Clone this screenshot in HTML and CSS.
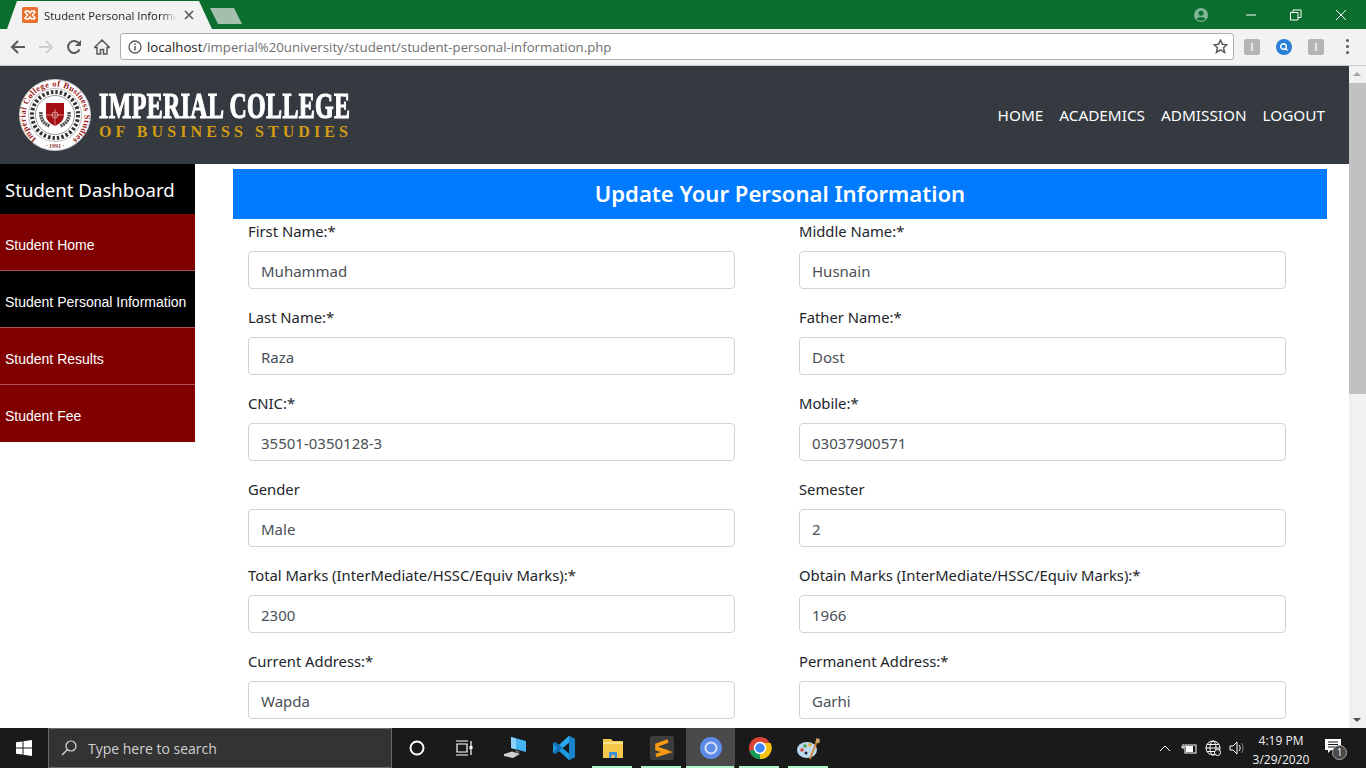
FILE: index.html
```html
<!DOCTYPE html>
<html lang="en">
<head>
<meta charset="utf-8">
<title>Student Personal Information</title>
<link rel="stylesheet" href="styles.css">
</head>
<body>
<div class="tabstrip">
  <div class="tab">
    <svg class="favicon" viewBox="0 0 16 16"><rect width="16" height="16" rx="2" fill="#e8702a"/><path d="M4 4h2.500L8 6l1.500-2H12l1 1-2.500 3L13 11l-1 1H9.500L8 10l-1.500 2H4l-1-1 2.500-3L3 5z" fill="none" stroke="#fff" stroke-width="1.500"/></svg>
    <span class="tabtitle">Student Personal Informa</span>
    <svg class="tabclose" viewBox="0 0 10 10"><path d="M1 1l8 8M9 1l-8 8" stroke="#5a5a5a" stroke-width="1.700"/></svg>
  </div>
  <div class="newtab"></div>
  <div class="spacer"></div>
  <svg class="profile" viewBox="0 0 14 14"><circle cx="7" cy="7" r="7" fill="#7fb596"/><circle cx="7" cy="5.200" r="2.500" fill="#0a6e2e"/><path d="M2.500 11c1-2.200 8-2.200 9 0-2 2.300-7 2.300-9 0z" fill="#0a6e2e"/></svg>
  <div class="winbtn"><svg viewBox="0 0 12 12"><path d="M1 6h10" stroke="#fff"/></svg></div>
  <div class="winbtn"><svg viewBox="0 0 12 12"><path d="M.5 3.500h7.500v7.500H.5zM3 3.500V1h8v7.500H8" fill="none" stroke="#fff"/></svg></div>
  <div class="winbtn"><svg viewBox="0 0 12 12"><path d="M1 1l10 10M11 1L1 11" stroke="#fff"/></svg></div>
</div>
<div class="toolbar">
  <svg class="navicon" viewBox="0 0 16 16"><path d="M15 8H2M8 2L2 8l6 6" fill="none" stroke="#5a5a5a" stroke-width="2"/></svg>
  <svg class="navicon" viewBox="0 0 16 16"><path d="M1 8h13M8 2l6 6-6 6" fill="none" stroke="#cfcfcf" stroke-width="2"/></svg>
  <svg class="navicon" viewBox="0 0 16 16"><path d="M13.500 10.500A6 6 0 1 1 13 4.500" fill="none" stroke="#5a5a5a" stroke-width="2"/><path d="M15 1v6H9z" fill="#5a5a5a"/></svg>
  <svg class="navicon" viewBox="0 0 16 16"><path d="M8 1L.5 8.500h2.500v6.500h3.500V10.500h3V15h3.500V8.500h2.500z" fill="none" stroke="#5a5a5a" stroke-width="1.500"/></svg>
  <div class="omnibox">
    <svg class="info" viewBox="0 0 14 14"><circle cx="7" cy="7" r="6" fill="none" stroke="#5a5a5a" stroke-width="1.300"/><path d="M7 6v4.500M7 3.500v1.500" stroke="#5a5a5a" stroke-width="1.500"/></svg>
    <span class="url"><span class="host">localhost</span>/imperial%20university/student/student-personal-information.php</span>
    <svg class="star" viewBox="0 0 14 14"><path d="M7 1l1.800 4 4.200.4-3.200 2.800 1 4.300L7 10.200 3.200 12.500l1-4.300L1 5.400 5.200 5z" fill="none" stroke="#5a5a5a" stroke-width="1.400"/></svg>
  </div>
  <div class="ext"><span class="extbar"></span></div>
  <svg class="extround" viewBox="0 0 16 16"><circle cx="8" cy="8" r="8" fill="#2a7fd6"/><circle cx="7.500" cy="7.500" r="2.800" fill="none" stroke="#fff" stroke-width="1.400"/><path d="M9.500 9.500l2 2" stroke="#fff" stroke-width="1.400"/></svg>
  <div class="ext"><span class="extbar"></span></div>
  <div class="dots"><i></i><i></i><i></i></div>
</div>
<div class="viewport">
  <div class="page">
    <header class="sitehead">
      <svg class="seal" viewBox="0 0 72 72">
        <circle cx="36" cy="36" r="35.500" fill="#fff" stroke="#c9c9c9"/>
        <defs><path id="ringtext" d="M17.500 60A29.500 29.500 0 1 1 54.500 60"/></defs>
        <text class="sealtext"><textPath href="#ringtext" textLength="146" lengthAdjust="spacing">Imperial College of Business Studies</textPath></text>
        <text class="sealyear" x="36" y="68.500" text-anchor="middle">· 1991 ·</text>
        <circle cx="36" cy="36" r="26.500" fill="none" stroke="#aaa" stroke-width=".8"/>
        <circle cx="36" cy="36" r="23" fill="none" stroke="#333" stroke-width="4" stroke-dasharray="2.500 2"/>
        <circle cx="36" cy="36" r="19.500" fill="#fff" stroke="#999"/>
        <path d="M22 33c-1 7 3 12 9 14M50 33c1 7-3 12-9 14" fill="none" stroke="#555" stroke-width="3.500" stroke-dasharray="2 .6"/>
        <path d="M27 24h18v12c0 6-5 9-9 11-4-2-9-5-9-11z" fill="#a50e13"/>
        <path d="M36 30v17M27 36h18" stroke="#e0a0a0" stroke-width=".8"/>
        <circle cx="36" cy="36" r="3" fill="none" stroke="#e0c0c0" stroke-width=".8"/>
      </svg>
      <div class="brand">
        <div class="brandname">IMPERIAL COLLEGE</div>
        <div class="brandsub">OF BUSINESS STUDIES</div>
      </div>
      <nav class="sitenav"><a>HOME</a><a>ACADEMICS</a><a>ADMISSION</a><a>LOGOUT</a></nav>
    </header>
    <div class="body">
      <aside class="side">
        <div class="sidehead">Student Dashboard</div>
        <a class="sidelink">Student Home</a>
        <a class="sidelink active">Student Personal Information</a>
        <a class="sidelink">Student Results</a>
        <a class="sidelink">Student Fee</a>
      </aside>
      <main class="main">
        <h1 class="formtitle">Update Your Personal Information</h1>
        <div class="formgrid">
          <div class="field"><label>First Name:*</label><input value="Muhammad"></div>
          <div class="field"><label>Middle Name:*</label><input value="Husnain"></div>
          <div class="field"><label>Last Name:*</label><input value="Raza"></div>
          <div class="field"><label>Father Name:*</label><input value="Dost"></div>
          <div class="field"><label>CNIC:*</label><input value="35501-0350128-3"></div>
          <div class="field"><label>Mobile:*</label><input value="03037900571"></div>
          <div class="field"><label>Gender</label><input value="Male"></div>
          <div class="field"><label>Semester</label><input value="2"></div>
          <div class="field"><label>Total Marks (InterMediate/HSSC/Equiv Marks):*</label><input value="2300"></div>
          <div class="field"><label>Obtain Marks (InterMediate/HSSC/Equiv Marks):*</label><input value="1966"></div>
          <div class="field"><label>Current Address:*</label><input value="Wapda"></div>
          <div class="field"><label>Permanent Address:*</label><input value="Garhi"></div>
        </div>
      </main>
    </div>
  </div>
  <div class="scrollbar">
    <div class="arrow up"></div>
    <div class="track"><div class="thumb"></div></div>
    <div class="arrow down"></div>
  </div>
</div>
<footer class="taskbar">
  <div class="start"><svg viewBox="0 0 16 16"><path d="M0 2.300L6.500 1.400V7.500H0zM7.500 1.200L16 0V7.500H7.500zM0 8.500H6.500V14.600L0 13.700zM7.500 8.500H16V16L7.500 14.800z" fill="#fff"/></svg></div>
  <div class="search">
    <svg viewBox="0 0 16 16"><circle cx="10" cy="6" r="5" fill="none" stroke="#ddd" stroke-width="1.200"/><path d="M6.500 9.500L1 15" stroke="#ddd" stroke-width="1.200"/></svg>
    <span>Type here to search</span>
  </div>
  <div class="tbicon"><svg class="i16" viewBox="0 0 16 16"><circle cx="8" cy="8" r="6.500" fill="none" stroke="#fff" stroke-width="2"/></svg></div>
  <div class="tbicon"><svg class="i18 shift" viewBox="0 0 18 16"><path d="M1 1h12M1 15h12M2 4h10v8H2zM16 1v14" fill="none" stroke="#fff" stroke-width="1.200"/><rect x="14.500" y="6" width="3" height="3" fill="#fff"/></svg></div>
  <div class="tbicon"><svg class="i24" viewBox="0 0 24 24"><path d="M8 1l15 4v11L8 12z" fill="#45b4f5"/><path d="M8 1l5 1.400v11L8 12z" fill="#8ed2fa"/><path d="M1 18l8-2.500 8 2.500-7 4-9-2z" fill="#cfcfcf"/><path d="M12 14l5 2-3 1z" fill="#8a8a8a"/></svg></div>
  <div class="tbicon"><svg class="i24" viewBox="0 0 24 24"><path d="M17 0l6 3v18l-6 3L7 15l-4 3-2-1.500V7.500L3 6l4 3z" fill="#1f9be0"/><path d="M17 6.500L10.500 12l6.500 5.500z" fill="#1a1a1a"/><path d="M17 0v6.500L10.500 12 7 9z" fill="#2aa8ee"/><path d="M17 0l6 3v18l-6 3z" fill="#1884c9"/><path d="M1 7.500L3 6l4 3 3.500 3L7 15l-4 3-2-1.500L5 12z" fill="#0f70b7"/></svg></div>
  <div class="tbicon run"><svg class="i24" viewBox="0 0 24 24"><path d="M2 3h8l2 2h10v17H2z" fill="#f5c84c"/><path d="M2 6h20v2H2z" fill="#fbe38a"/><path d="M8 22v-6h8v6h-2.500v-3h-3v3z" fill="#3f8fd6"/></svg></div>
  <div class="tbicon run"><svg class="i24" viewBox="0 0 24 24"><rect width="24" height="24" rx="2" fill="#3c3c3c"/><path d="M18 5L7 9v4l10 3-11 3.500M7 12.500L18 16" fill="none" stroke="#f89a0e" stroke-width="3.500"/></svg></div>
  <div class="tbicon run active"><svg class="i24" viewBox="0 0 24 24"><circle cx="12" cy="12" r="11" fill="#5f8be8"/><circle cx="12" cy="12" r="5.500" fill="#5f8be8" stroke="#d6e2fb" stroke-width="2"/></svg></div>
  <div class="tbicon run"><svg class="i24" viewBox="0 0 24 24"><circle cx="12" cy="12" r="11" fill="#db4437"/><path d="M12 12L1.500 15A11 11 0 0 0 14 23z" fill="#0f9d58"/><path d="M12 7h10.500A11 11 0 0 1 12 23z" fill="#f4c20d"/><circle cx="12" cy="12" r="5.500" fill="#4285f4" stroke="#fff" stroke-width="1.500"/></svg></div>
  <div class="tbicon run"><svg class="i24" viewBox="0 0 24 24"><ellipse cx="10" cy="14" rx="10" ry="8" fill="#bcd9ee"/><circle cx="5" cy="14" r="1.800" fill="#d94a3a"/><circle cx="8" cy="10" r="1.800" fill="#4ca64c"/><circle cx="13" cy="9" r="1.800" fill="#e8a93a"/><circle cx="9" cy="17" r="1.500" fill="#223"/><path d="M20 5L13 23" stroke="#d8803c" stroke-width="1.800"/><path d="M18.500 6l1-4 3 1 .5 3-2 1.500z" fill="#c9a56a"/></svg></div>
  <div class="spacer"></div>
  <div class="tray">
    <svg class="chev" viewBox="0 0 12 7"><path d="M1 6l5-5 5 5" fill="none" stroke="#fff" stroke-width="1"/></svg>
    <svg class="batt" viewBox="0 0 16 11"><rect x="4" y="2" width="11" height="8" fill="none" stroke="#fff"/><rect x="5" y="3" width="7" height="6" fill="#fff"/><path d="M0 4h4M2 1v5" stroke="#fff"/></svg>
    <svg class="globe" viewBox="0 0 16 16"><circle cx="8" cy="8" r="7" fill="none" stroke="#fff"/><ellipse cx="8" cy="8" rx="3" ry="7" fill="none" stroke="#fff"/><path d="M1 8h14M2 4.500h12M2 11.500h12" stroke="#fff"/><circle cx="12.500" cy="12.500" r="3" fill="#1a1a1a" stroke="#fff"/></svg>
    <svg class="vol" viewBox="0 0 16 14"><path d="M1 5h3l4-4v12l-4-4H1z" fill="none" stroke="#fff"/><path d="M10 4c1.500 2 1.500 4 0 6" fill="none" stroke="#fff"/><path d="M12.500 2c2 3 2 7 0 10" fill="none" stroke="#888"/></svg>
    <div class="clock"><div>4:19 PM</div><div>3/29/2020</div></div>
    <div class="notif">
      <svg viewBox="0 0 16 14"><path d="M0 0h16v11H6l-3 3v-3H0z" fill="#fff"/><path d="M3 3h10M3 5.500h10M3 8h10" stroke="#1a1a1a"/></svg>
      <span class="notifcount">1</span>
    </div>
  </div>
</footer>
</body>
</html>
```
FILE: styles.css
```css
* { box-sizing: border-box; }
html, body { margin: 0; height: 768px; overflow: hidden; }
body { display: flex; flex-direction: column; font-family: "Noto Sans", sans-serif; background: #fff; }
.spacer { flex: 1; }

.tabstrip { height: 29px; background: #0a6e2e; display: flex; align-items: flex-end; flex: none; padding-right: 3px; }
.tab { width: 205px; height: 28px; margin-left: 7px; background: #f2f2f2; clip-path: polygon(0 100%, 10px 0, 192px 0, 205px 100%); display: flex; align-items: center; padding: 0 0 0 15px; }
.favicon { width: 16px; height: 16px; flex: none; }
.tabtitle { width: 133px; margin-left: 6px; font: 11.300px "Open Sans", sans-serif; color: #222; white-space: nowrap; overflow: hidden; -webkit-mask-image: linear-gradient(90deg, #000 88%, transparent); mask-image: linear-gradient(90deg, #000 88%, transparent); }
.tabclose { width: 10px; height: 10px; margin-left: 7px; flex: none; }
.newtab { width: 32px; height: 16px; margin: 0 0 5px -2px; background: #a5bfae; clip-path: polygon(0 0, 24px 0, 32px 100%, 8px 100%); }
.profile { width: 14px; height: 14px; align-self: center; margin-right: 20px; flex: none; }
.winbtn { width: 45px; height: 29px; display: flex; align-items: center; justify-content: center; flex: none; }
.winbtn svg { width: 12px; height: 12px; }

.toolbar { height: 37px; flex: none; background: #f2f2f2; border-bottom: 1px solid #c8c8c8; display: flex; align-items: center; padding: 0 0 1px 10px; }
.navicon { width: 16px; height: 16px; margin-right: 12px; flex: none; }
.omnibox { width: 1114px; height: 27px; margin: 0 10px 0 -2px; background: #fff; border: 1px solid #aeaeae; border-radius: 3px; display: flex; align-items: center; padding: 0 5px 0 7px; }
.info { width: 14px; height: 14px; flex: none; }
.url { margin-left: 5px; font: 13.220px "Open Sans", sans-serif; color: #6f6f6f; white-space: nowrap; flex: 1; }
.host { color: #222; }
.star { width: 15px; height: 15px; flex: none; }
.ext { width: 16px; height: 16px; background: #b5b5b5; border-radius: 2px; margin-right: 16px; display: flex; align-items: center; justify-content: center; flex: none; }
.extbar { width: 2px; height: 8px; background: #e6e6e6; }
.extround { width: 16px; height: 16px; margin-right: 16px; flex: none; }
.dots { display: flex; flex-direction: column; gap: 3px; margin-left: 6px; }
.dots i { width: 3px; height: 3px; background: #5a5a5a; border-radius: 50%; display: block; }

.viewport { height: 662px; flex: none; display: flex; overflow: hidden; }
.page { width: 1349px; flex: none; overflow: hidden; }
.sitehead { height: 98px; background: #343a40; display: flex; align-items: center; padding: 0 24px 0 19px; }
.seal { width: 72px; height: 72px; flex: none; margin-top: -1px; }
.sealtext { font: 700 8.500px "Liberation Serif", serif; fill: #a01a20; }
.sealyear { font: 700 6px "Liberation Serif", serif; fill: #8a3a3a; }
.brand { margin-left: 8px; width: 252px; color: #fff; margin-top: -1px; }
.brandname { font: 700 35px/33px "Liberation Serif", serif; letter-spacing: 0.550px; white-space: nowrap; -webkit-text-stroke: 1.200px #fff; transform: scaleX(0.684); transform-origin: left center; width: 368px; }
.brandsub { font: 700 16px/17px "Liberation Serif", serif; letter-spacing: 4.080px; color: #d39a12; white-space: nowrap; }
.sitenav { margin-left: auto; display: flex; gap: 16px; margin-top: -1px; }
.sitenav a { font-size: 15.300px; line-height: 24px; color: #fff; }

.body { display: flex; }
.side { width: 195px; flex: none; }
.sidehead { height: 50px; background: #000; color: #fff; font-size: 18.600px; line-height: 52px; padding-left: 5px; }
.sidelink { display: block; height: 57px; background: #800000; color: #fff; font: 14px/62px "Liberation Sans", sans-serif; padding-left: 5px; border-bottom: 1px solid #a55; }
.sidelink.active { background: #000; }
.sidelink:last-child { border-bottom: 0; }
.main { flex: 1; padding: 5px 22px 0 38px; }
.formtitle { margin: 0; height: 50px; background: #007bff; color: #fff; font-size: 22.100px; font-weight: 600; line-height: 48px; text-align: center; }
.formgrid { display: grid; grid-template-columns: 487px 487px; column-gap: 64px; padding-left: 15px; }
.field { height: 86px; }
.field label { display: block; font-size: 14.800px; line-height: 24px; color: #212529; margin-bottom: 8px; white-space: nowrap; }
.field input { display: block; width: 100%; height: 38px; padding: 2px 12px 0; border: 1px solid #ced4da; border-radius: 4px; font: 15px "Noto Sans", sans-serif; color: #495057; background: #fff; outline: none; }

.scrollbar { width: 17px; flex: none; background: #f1f1f1; display: flex; flex-direction: column; }
.arrow { height: 17px; flex: none; position: relative; }
.arrow::after { content: ""; position: absolute; left: 4px; width: 0; height: 0; border-left: 4px solid transparent; border-right: 4px solid transparent; }
.arrow.up::after { top: 6px; border-bottom: 4px solid #a3a3a3; }
.arrow.down::after { top: 7px; border-top: 4px solid #505050; }
.track { flex: 1; }
.thumb { height: 311px; background: #c1c1c1; }

.taskbar { height: 40px; flex: none; background: #1a1a1a; display: flex; align-items: stretch; color: #fff; }
.start { width: 48px; display: flex; align-items: center; justify-content: center; flex: none; }
.start svg { width: 16px; height: 16px; }
.search { width: 344px; flex: none; background: #333; border: 1px solid #6b6b6b; display: flex; align-items: center; padding-left: 12px; font: 14px "Open Sans", sans-serif; color: #d0d0d0; }
.search svg { width: 16px; height: 16px; margin-right: 11px; }
.tbicon { width: 49px; flex: none; display: flex; align-items: center; justify-content: center; position: relative; }
.tbicon.run::after { content: ""; position: absolute; left: 4px; right: 5px; bottom: 0; height: 2px; background: #b0f5c8; }
.tbicon.active { background: #4a4a4a; }
.tbicon.active::after { left: 0; right: 1px; }
.i16 { width: 16px; height: 16px; }
.i18 { width: 18px; height: 16px; }
.i18.shift { margin-right: 4px; }
.i24 { width: 24px; height: 24px; }
.tray { display: flex; align-items: center; padding-right: 13px; }
.chev { width: 12px; height: 7px; margin-right: 10px; }
.batt { width: 16px; height: 11px; margin-right: 8px; }
.globe { width: 16px; height: 16px; margin-right: 8px; }
.vol { width: 16px; height: 14px; margin-right: 3px; }
.clock { width: 66px; font: 12px/19px "Open Sans", sans-serif; text-align: center; color: #f0f0f0; padding-top: 3px; }
.notif { width: 28px; margin-left: 11px; position: relative; height: 24px; }
.notif svg { width: 16px; height: 14px; position: absolute; left: 0; top: 3px; }
.notifcount { position: absolute; left: 7px; top: 9px; width: 15px; height: 15px; border-radius: 50%; background: #4a4a4a; border: 1px solid #aaa; font: 10px/13px "Open Sans", sans-serif; text-align: center; }
```
